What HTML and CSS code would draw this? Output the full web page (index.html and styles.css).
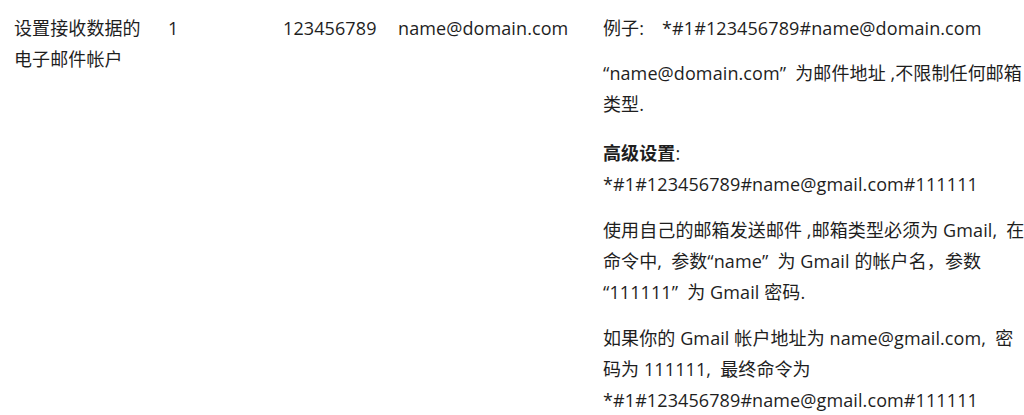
FILE: index.html
```html
<!DOCTYPE html>
<html lang="zh-CN">
<head>
<meta charset="utf-8">
<title>设置接收数据的电子邮件帐户</title>
<link rel="stylesheet" href="styles.css">
</head>
<body>
<div class="table">
  <div class="row">
    <div class="cell c-name">设置接收数据的电子邮件帐户</div>
    <div class="cell c-num">1</div>
    <div class="cell c-pwd">123456789</div>
    <div class="cell c-mail">name@domain.com</div>
    <div class="cell c-desc">
      <p class="p-example">例子:<span class="cmd">*#1#123456789#name@domain.com</span></p>
      <p class="p-note">“name@domain.com”&ensp;为邮件地址 ,不限制任何邮箱<br>类型.</p>
      <p class="p-adv"><strong>高级设置</strong>:<br>*#1#123456789#name@gmail.com#111111</p>
      <p class="p-use">使用自己的邮箱发送邮件 ,邮箱类型必须为 Gmail,&ensp;在<br>命令中,&ensp;参数“name”&ensp;为 Gmail 的帐户名，参数<br>“111111”&ensp;为 Gmail 密码.</p>
      <p class="p-final">如果你的 Gmail 帐户地址为 name@gmail.com,&ensp;密<br>码为 111111,&ensp;最终命令为<br>*#1#123456789#name@gmail.com#111111</p>
    </div>
  </div>
</div>
</body>
</html>
```
FILE: styles.css
```css
html, body {
  margin: 0;
  padding: 0;
  overflow: hidden;
  background: #ffffff;
}

body {
  font-family: "Open Sans", "Noto Sans CJK SC", sans-serif;
  font-size: 18px;
  line-height: 31px;
  letter-spacing: 0.1px;
  color: #1e1e1e;
}

.table {
  padding: 13px 0 0 14px;
}

.row {
  display: grid;
  grid-template-columns: 140px 101px 101px 191px 480px;
  column-gap: 14px;
  align-items: start;
}

.cell {
  min-width: 0;
}

.c-desc p {
  margin: 0;
  white-space: nowrap;
}

.c-desc .p-note { margin-top: 14px; }
.c-desc .p-adv { margin-top: 18px; }
.c-desc .p-use { margin-top: 15px; }
.c-desc .p-final { margin-top: 15px; }

.cmd {
  margin-left: 18px;
}

strong {
  font-weight: 700;
}
```
